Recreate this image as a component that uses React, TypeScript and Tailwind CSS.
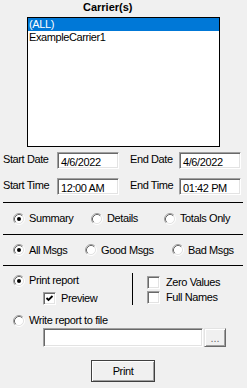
import React from "react";

// Classic Win32 report dialog: carrier list, date/time range, report options.

function Radio({ checked }: { checked?: boolean }) {
  return (
    <svg width="12" height="12" viewBox="0 0 12 12" className="shrink-0">
      <circle cx="6" cy="6" r="4.5" fill="white" />
      <path d="M2.11 9.89 A5.5 5.5 0 0 1 9.89 2.11" fill="none" stroke="#a0a0a0" />
      <path d="M9.89 2.11 A5.5 5.5 0 0 1 2.11 9.89" fill="none" stroke="#ffffff" />
      <path d="M2.82 9.18 A4.5 4.5 0 0 1 9.18 2.82" fill="none" stroke="#696969" />
      <path d="M9.18 2.82 A4.5 4.5 0 0 1 2.82 9.18" fill="none" stroke="#e3e3e3" />
      {checked && <circle cx="6" cy="6" r="2" fill="#000" />}
    </svg>
  );
}

function Check({ checked }: { checked?: boolean }) {
  return (
    <div className="w-[13px] h-[13px] shrink-0 border border-t-[#a0a0a0] border-l-[#a0a0a0] border-r-white border-b-white bg-white shadow-[inset_1px_1px_0_#696969,inset_-1px_-1px_0_#e3e3e3] flex items-center justify-center">
      {checked && (
        <svg width="9" height="9" viewBox="0 0 9 9">
          <polyline points="1.5,4 3.5,6 7.5,2" fill="none" stroke="#000" strokeWidth="1.8" />
        </svg>
      )}
    </div>
  );
}

function Edit({ value, w }: { value: string; w: string }) {
  return (
    <div
      className={`${w} h-[17px] shrink-0 bg-white border border-t-[#a0a0a0] border-l-[#a0a0a0] border-r-white border-b-white shadow-[inset_1px_1px_0_#696969,inset_-1px_-1px_0_#e3e3e3] pl-[3px] pt-[4px] leading-[11px] whitespace-nowrap`}
    >
      {value}
    </div>
  );
}

function RadioItem({ label, checked, w }: { label: string; checked?: boolean; w: string }) {
  return (
    <div className={`${w} flex items-center h-[13px] gap-[4px] shrink-0`}>
      <Radio checked={checked} />
      <span className="leading-[13px] whitespace-nowrap">{label}</span>
    </div>
  );
}

function Line() {
  return <div className="ml-[3px] w-[240px] h-[1px] bg-black" />;
}

export default function App() {
  return (
    <div className="w-[247px] h-[388px] bg-[#f0f0f0] text-black text-[11px] tracking-[-0.4px] font-['Liberation_Sans',Arial,sans-serif] overflow-hidden">
      <div className="h-[17px] pt-[1px] pl-[83px] font-bold tracking-normal leading-[13px]">Carrier(s)</div>

      <div className="ml-[27px] w-[193px] h-[130px] border border-black bg-white">
        <div className="h-[13px] leading-[13px] pl-[1px] bg-[#0078d7] text-white">(ALL)</div>
        <div className="h-[13px] leading-[13px] pl-[1px]">ExampleCarrier1</div>
      </div>

      <div className="mt-[5px] flex h-[17px]">
        <div className="w-[57px] pl-[3px] pt-[1px] leading-[13px] shrink-0">Start Date</div>
        <Edit value="4/6/2022" w="w-[62px]" />
        <div className="w-[60px] pl-[11px] pt-[1px] leading-[13px] shrink-0">End Date</div>
        <Edit value="4/6/2022" w="w-[62px]" />
      </div>

      <div className="mt-[9px] flex h-[17px]">
        <div className="w-[57px] pl-[3px] pt-[1px] leading-[13px] shrink-0">Start Time</div>
        <Edit value="12:00 AM" w="w-[62px]" />
        <div className="w-[60px] pl-[11px] pt-[1px] leading-[13px] shrink-0">End Time</div>
        <Edit value="01:42 PM" w="w-[62px]" />
      </div>

      <div className="mt-[7px]">
        <Line />
      </div>
      <div className="h-[31px] flex items-center pl-[13px]">
        <RadioItem label="Summary" checked w="w-[78px]" />
        <RadioItem label="Details" w="w-[73px]" />
        <RadioItem label="Totals Only" w="w-[70px]" />
      </div>
      <Line />
      <div className="h-[30px] flex items-center pl-[13px]">
        <RadioItem label="All Msgs" checked w="w-[72px]" />
        <RadioItem label="Good Msgs" w="w-[87px]" />
        <RadioItem label="Bad Msgs" w="w-[60px]" />
      </div>
      <Line />

      <div className="mt-[7px] flex">
        <div className="w-[119px] ml-[13px] pt-[1px]">
          <RadioItem label="Print report" checked w="w-[100px]" />
          <div className="mt-[5px] ml-[30px] flex items-center gap-[5px] h-[13px]">
            <Check checked />
            <span className="leading-[13px]">Preview</span>
          </div>
        </div>
        <div className="w-[1px] h-[32px] bg-black" />
        <div className="ml-[14px] pt-[3px]">
          <div className="flex items-center gap-[6px] h-[13px]">
            <Check />
            <span className="leading-[13px]">Zero Values</span>
          </div>
          <div className="mt-[2px] flex items-center gap-[6px] h-[13px]">
            <Check />
            <span className="leading-[13px]">Full Names</span>
          </div>
        </div>
      </div>

      <div className="mt-[9px] pl-[13px]">
        <RadioItem label="Write report to file" w="w-[140px]" />
      </div>

      <div className="mt-[1px] pl-[43px] flex">
        <div className="w-[160px] h-[19px] bg-white border border-t-[#a0a0a0] border-l-[#a0a0a0] border-r-white border-b-white shadow-[inset_1px_1px_0_#696969,inset_-1px_-1px_0_#e3e3e3]" />
        <div className="ml-[1px] w-[22px] h-[19px] border border-t-[#e3e3e3] border-l-[#e3e3e3] border-r-[#696969] border-b-[#696969] shadow-[inset_1px_1px_0_#ffffff,inset_-1px_-1px_0_#a0a0a0] flex items-end justify-center pb-[2px] text-[#6d6d6d] leading-[11px] tracking-normal">
          ...
        </div>
      </div>

      <button
        type="button"
        className="mt-[13px] ml-[91px] w-[64px] h-[22px] block border border-[#404040] bg-[#f0f0f0] shadow-[inset_1px_1px_0_#ffffff,inset_-1px_-1px_0_#a0a0a0] leading-[13px] text-center"
      >
        Print
      </button>
    </div>
  );
}
